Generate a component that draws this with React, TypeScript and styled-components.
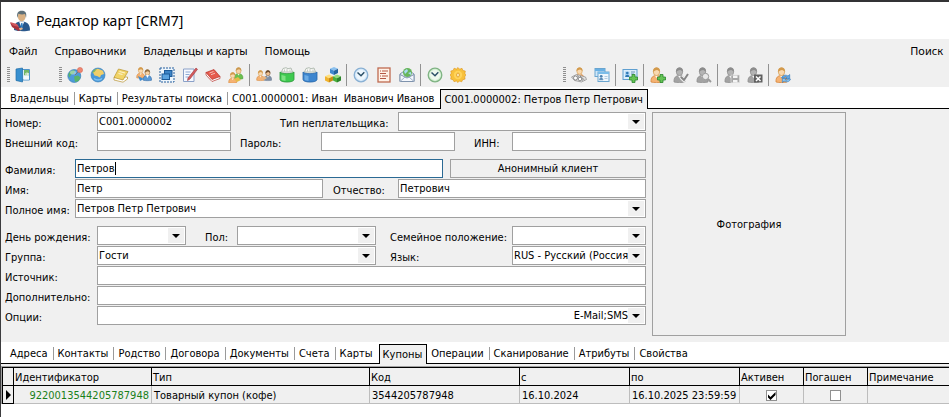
import React from "react";
import styled, { createGlobalStyle } from "styled-components";

const uiFont = `"DejaVu Sans Condensed", "Noto Sans", sans-serif`;
const shellFont = `"Noto Sans", "Open Sans", sans-serif`;

const arrow = `url("data:image/svg+xml,%3Csvg xmlns='http://www.w3.org/2000/svg' width='16' height='15'%3E%3Crect width='16' height='15' fill='%23f0f0f0'/%3E%3Cpath d='M4 6h8l-4 4z' fill='%23000'/%3E%3C/svg%3E")`;
const tick = `url("data:image/svg+xml,%3Csvg xmlns='http://www.w3.org/2000/svg' width='9' height='9'%3E%3Cpath d='M1 3.5v3L3.5 9 8.500 4V1L3.500 6z' fill='%23000'/%3E%3C/svg%3E")`;

const Global = createGlobalStyle`
  * { box-sizing: border-box; }
  body { margin: 0; background: #fff; }
  button, input, select, table { font: inherit; color: inherit; }
`;

const Window = styled.div`
  min-height: 100vh;
  border-left: 1px solid #3c3c3e;
  border-top: 2px solid #333335;
  background: #fff;
  color: #000;
  font-family: ${uiFont};
  font-size: 11px;
  line-height: 15px;
`;

const TitleBar = styled.header`
  display: flex;
  align-items: center;
  gap: 5px;
  height: 37px;
  padding-left: 8px;
`;

const Title = styled.h1`
  margin: 0;
  font-family: ${shellFont};
  font-size: 14px;
  line-height: 24px;
  font-weight: 400;
  color: #000;
`;

const MenuBar = styled.nav`
  display: flex;
  align-items: center;
  height: 23px;
  padding: 0 6px 0 0;
  background: #f0f0f0;
  font-family: ${shellFont};
  font-size: 11px;
`;

const MenuItem = styled.button<{ $last?: boolean }>`
  border: 0;
  padding: 0 8px;
  background: none;
  line-height: 20px;
  margin-left: ${(p) => (p.$last ? "auto" : "0")};
  padding-right: ${(p) => (p.$last ? "0" : "9px")};
`;

const ToolBar = styled.div`
  display: flex;
  align-items: center;
  height: 25px;
  background: #f0f0f0;
`;

const ToolGroup = styled.div<{ $indent: number }>`
  display: flex;
  align-items: center;
  height: 24px;
  padding-right: 4px;
  margin-left: ${(p) => p.$indent}px;
`;

const Grip = styled.span`
  width: 3px;
  height: 16px;
  margin-right: 1px;
  background: repeating-linear-gradient(#8f8f8f 0 1px, #f0f0f0 1px 2px);
`;

const ToolButton = styled.button`
  display: flex;
  align-items: center;
  justify-content: center;
  width: 23px;
  height: 22px;
  border: 0;
  padding: 0;
  background: none;
`;

const Separator = styled.span`
  width: 1px;
  height: 22px;
  margin: 0 2px;
  background: #929292;
`;

const Tabs = styled.div`
  display: flex;
  align-items: flex-end;
  height: 22px;
  padding-left: 5px;
  background: linear-gradient(#000, #000) bottom / 100% 1px no-repeat #fff;
`;

const Tab = styled.button<{ $active?: boolean; $divider?: boolean }>`
  display: flex;
  align-items: center;
  height: ${(p) => (p.$active ? 20 : 19)}px;
  border: solid #000;
  border-width: ${(p) => (p.$active ? "1px 1px 0" : "0")};
  padding: ${(p) => (p.$active ? "0 4px 0 3px" : "0 6px 0 4px")};
  margin-bottom: ${(p) => (p.$active ? 0 : 1)}px;
  background: ${(p) =>
    p.$active
      ? "#f0f0f0"
      : p.$divider
      ? "linear-gradient(#9a9a9a, #9a9a9a) right 3px / 1px 13px no-repeat"
      : "none"};
  white-space: pre;
`;

const Form = styled.form`
  display: grid;
  grid-template-columns: minmax(0, 641fr) minmax(0, 194fr) minmax(0, 97fr);
  gap: 6px;
  padding: 3px 0 6px 4px;
  background: #f0f0f0;
`;

const Fields = styled.div`
  display: flex;
  flex-direction: column;
  gap: 1px;
`;

const Row = styled.div<{ $columns: string; $spaced?: boolean }>`
  display: grid;
  grid-template-columns: ${(p) => p.$columns};
  height: 19px;
  margin-top: ${(p) => (p.$spaced ? 7 : 0)}px;
`;

const Label = styled.label<{ $indent?: number }>`
  padding: 4px 0 0 ${(p) => p.$indent ?? 0}px;
  white-space: nowrap;
`;

const TextInput = styled.input`
  width: 100%;
  min-width: 0;
  height: 19px;
  border: 1px solid #a0a0a0;
  border-radius: 0;
  padding: 0 1px 1px;
  background: #fff;
  outline: none;
`;

const ActiveInput = styled(TextInput)`
  border-color: #2b6a94;
  background: linear-gradient(#000, #000) 39px 2px / 1px 13px no-repeat #fff;
`;

const Select = styled.select<{ $right?: boolean }>`
  appearance: none;
  width: 100%;
  min-width: 0;
  height: 19px;
  border: 1px solid #a0a0a0;
  border-radius: 0;
  padding: 0 17px 1px 1px;
  background: ${arrow} right 1px center no-repeat #fff;
  text-align-last: ${(p) => (p.$right ? "right" : "left")};
  outline: none;
`;

const PlainButton = styled.button`
  height: 19px;
  border: 1px solid #a0a0a0;
  padding: 0;
  background: #f0f0f0;
`;

const Photo = styled.button`
  height: 224px;
  border: 1px solid #a0a0a0;
  padding: 0;
  background: #f0f0f0;
`;

const GridFrame = styled.div`
  border-left: 1px solid #a0a0a0;
  border-top: 1px solid #a0a0a0;
  margin-top: 2px;
  overflow: hidden;
`;

const TableArea = styled.section`
  background: linear-gradient(#f0f0f0, #f0f0f0) top / 100% 2px no-repeat #fff;
  display: flow-root;
`;

const DataTable = styled.table`
  width: 100%;
  table-layout: fixed;
  border-collapse: separate;
  border-spacing: 0;
  background: #f0f0f0;
`;

const Col = styled.col<{ $width?: number }>`
  width: ${(p) => (p.$width ? `${p.$width}px` : "auto")};
`;

const Head = styled.th`
  height: 19px;
  border: solid #000;
  border-width: 1px 1px 1px 0;
  padding: 1px 1px 0;
  font-weight: 400;
  text-align: left;
  white-space: nowrap;
  &:first-child { border-left-width: 1px; }
  &:last-child { border-right-width: 0; }
`;

const Cell = styled.td<{ $align?: string; $color?: string }>`
  height: 18px;
  border: solid #bdbdbd;
  border-width: 0 1px 1px 0;
  padding: 1px 2px 0;
  text-align: ${(p) => p.$align ?? "left"};
  color: ${(p) => p.$color ?? "inherit"};
  white-space: nowrap;
  &:last-child { border-right-width: 0; }
`;

const Marker = styled.td`
  height: 18px;
  border: solid #000;
  border-width: 0 1px 1px;
  padding: 0 0 0 3px;
  svg { display: block; }
`;

const CheckBox = styled.input`
  appearance: none;
  display: block;
  width: 11px;
  height: 11px;
  margin: 0 auto;
  border: 1px solid #909090;
  background: #fff;
  &:checked { background: ${tick} center no-repeat #fff; }
`;

/* ---------- icons ---------- */

const Svg = ({ size = 16, children }: { size?: number; children: React.ReactNode }) => (
  <svg width={size} height={size} viewBox="0 0 16 16" fill="none" aria-hidden="true">
    {children}
  </svg>
);

type Tone = { hair: string; skin: string; body: string; edge: string };
const orange: Tone = { hair: "#d39a4c", skin: "#f9d9b0", body: "#f5b272", edge: "#d6863c" };
const grey: Tone = { hair: "#8c8c8c", skin: "#b4b4b4", body: "#a3a3a3", edge: "#8f8f8f" };
const blue: Tone = { hair: "#8f6a3c", skin: "#f7d3a4", body: "#5b9ad6", edge: "#2f6aa8" };
const green: Tone = { hair: "#c9974e", skin: "#f7d3a4", body: "#6cc04e", edge: "#4c9c3a" };
const brown: Tone = { hair: "#6b4a2c", skin: "#f0c090", body: "#7d8fa6", edge: "#6b7a90" };

const Person = ({ tone, x = 0, y = 0, s = 1 }: { tone: Tone; x?: number; y?: number; s?: number }) => (
  <g transform={`translate(${x} ${y}) scale(${s})`}>
    <path d="M1 15c-.4-4.500 2-6.500 5.500-6.500S12.400 10.500 12 15c-3 .8-8 .8-11 0z" fill={tone.body} stroke={tone.edge} strokeWidth=".8" />
    <path d="M5 8.500l1.500 2.500L8 8.500z" fill="#fff" />
    <ellipse cx="6.500" cy="4.700" rx="3.200" ry="3.900" fill={tone.skin} stroke={tone.hair} strokeWidth=".7" />
    <path d="M3 5C2.800 2.500 4.200.5 6.600.5S10.200 2.500 10 5C9 3.800 8 3.300 7 3 6 3.200 4.500 3.800 3 5z" fill={tone.hair} />
  </g>
);

const Globe = () => (
  <>
    <circle cx="7.300" cy="9" r="6.500" fill="#4d9bd8" stroke="#3179b5" strokeWidth=".6" />
    <path d="M2 6C4 3.500 6 3.100 8 3.500l-1 3-3 1-1.500 3C1 9 1.400 7 2 6zM7 9.500l4-1 2.500 2-2 3.500-3.500 1z" fill="#59b46a" />
    <ellipse cx="6" cy="5.500" rx="3" ry="2" fill="#fff" opacity=".4" />
  </>
);

const Clock = ({ ring, face }: { ring: string; face: string }) => (
  <Svg>
    <circle cx="8" cy="8" r="6.800" fill={face} stroke={ring} strokeWidth="1.300" />
    <circle cx="8" cy="8" r="4.900" fill="#fff" opacity=".6" />
    <path d="M4.500 5.500L8 8.800l3.300-3.600" stroke="#2c5068" strokeWidth="1.500" />
  </Svg>
);

const Bucket = ({ main, dark, light }: { main: string; dark: string; light: string }) => (
  <Svg>
    <path d="M2.500 5L4 1.500l3-.8 2 1 3-.7L13.500 5z" fill="#f7f9f5" stroke="#9aa69a" strokeWidth=".7" />
    <path d="M5.500 2.500v2M8 2v2.500M11 2.500v2" stroke="#b3b3b3" strokeWidth=".7" />
    <path d="M1 5v7.500c0 3.400 14 3.400 14 0V5c-2 2.200-12 2.200-14 0z" fill={main} stroke={dark} strokeWidth=".8" />
    <path d="M2.500 8v4.500c1 1 3 1.300 4 1.400V9z" fill={light} opacity=".6" />
  </Svg>
);

const Cube = ({ x, y, c }: { x: number; y: number; c: [string, string, string] }) => (
  <g transform={`translate(${x} ${y})`}>
    <path d="M0 1.800L4 0l4 1.800L4 3.700z" fill={c[0]} />
    <path d="M0 1.800l4 1.900V8L0 6z" fill={c[1]} />
    <path d="M8 1.800L4 3.700V8l4-2z" fill={c[2]} />
  </g>
);

const Book = ({ main, dark }: { main: string; dark: string }) => (
  <Svg>
    <path d="M1 10.500V13l9 2.200 4.500-3.200v-2z" fill="#fff" stroke={dark} strokeWidth=".7" />
    <path d="M5.500 2L15 4.500 10 13 1 10.500z" fill={main} stroke={dark} strokeWidth=".7" />
    <path d="M6.500 4.500l5.500 1.500M5.500 6.500l4 1" stroke="#fff" opacity=".7" />
  </Svg>
);

const RedBook = () => (
  <Svg>
    <path d="M1 5.500V8l6 6.500 8-3v-2z" fill="#fff" stroke="#b7332c" strokeWidth=".7" />
    <path d="M1 5.500L9 2.500l6 7-8 3z" fill="#e55a4c" stroke="#b7332c" strokeWidth=".7" />
    <path d="M4.500 6l4-1.500M6 7.700l4-1.500" stroke="#fff" opacity=".6" />
  </Svg>
);

const icons: Record<string, React.ReactNode> = {
  exit: (
    <Svg>
      <path d="M1.500 2.500h13v10.500h-13z" fill="#d9ecfa" stroke="#4f94c9" />
      <path d="M9 3h5v5.500H9z" fill="#72b665" />
      <path d="M9 8.500h5v4H9z" fill="#f3f8fb" />
      <path d="M1 2l6.500-1v14L1 13.500z" fill="#378fcf" stroke="#226fa6" strokeWidth=".7" />
      <path d="M10 7h3.500M12 5.500L13.500 7 12 8.500" stroke="#fff" />
    </Svg>
  ),
  globePin: (
    <Svg>
      <Globe />
      <path d="M8 8l4-4" stroke="#777" />
      <circle cx="13" cy="3" r="2.600" fill="#ee8672" stroke="#d0604c" strokeWidth=".5" />
    </Svg>
  ),
  globe: (
    <Svg>
      <circle cx="8" cy="8" r="7" fill="#4898d9" stroke="#3078b4" strokeWidth=".6" />
      <path d="M3 5.500c1-2.500 3-3.800 5-3.800l5 2 1 3.300-3 1-1 2.500L7 9 4.500 8.500z" fill="#f1ce68" />
      <path d="M2 6c1-2.500 2.500-4 5-4.300L4.500 5z" fill="#85b95a" />
      <path d="M4 11.500c2 2 6 2 8 0" stroke="#83c2ef" strokeWidth="1.400" />
    </Svg>
  ),
  yellowBook: <Book main="#f1d468" dark="#b7922f" />,
  couple: (
    <Svg>
      <Person tone={orange} y={0} s={0.72} />
      <Person tone={blue} x={6.500} y={2} s={0.75} />
      <path d="M2 9l6 3-4 2z" fill="#418cce" />
      <path d="M10 8l1.500 3L13 8z" fill="#fff" />
    </Svg>
  ),
  windows: (
    <Svg>
      <rect x="1" y="1" width="14" height="14" fill="#edf5fc" stroke="#245f9e" strokeDasharray="2 1" />
      <rect x="5.500" y="3.500" width="7.500" height="6" fill="#3d84c6" stroke="#1b5998" />
      <rect x="3" y="7" width="7.500" height="5.500" fill="#5aa2df" stroke="#1b5998" />
    </Svg>
  ),
  notePen: (
    <Svg>
      <path d="M1.500 2h10.500v12.500H1.500z" fill="#f6f9ff" stroke="#8ba1c8" />
      <path d="M3.500 5h5M3.500 7.500h4M3.500 10h3" stroke="#8ea9d5" />
      <path d="M14 1l1.500 1.300L8 12l-2.500 1.500L6 11z" fill="#d65c5c" stroke="#9b3540" strokeWidth=".6" />
    </Svg>
  ),
  redBook: <RedBook />,
  people: (
    <Svg>
      <Person tone={green} x={5.500} y={0} s={0.78} />
      <Person tone={orange} x={0} y={5} s={0.72} />
      <path d="M6 12l4-2 3 3-4 2z" fill="#e5bb48" />
    </Svg>
  ),
  owners: (
    <Svg>
      <Person tone={orange} y={3} s={0.68} />
      <Person tone={brown} x={7.500} y={3} s={0.68} />
      <path d="M5 11l3-2 3 2-3 2z" fill="#e7b480" />
    </Svg>
  ),
  greenBucket: <Bucket main="#3fca50" dark="#299638" light="#a7f0a3" />,
  blueBucket: <Bucket main="#3e86cf" dark="#2666a7" light="#8bc4f4" />,
  cubes: (
    <Svg>
      <Cube x={5} y={0} c={["#8bc1ef", "#4188ce", "#24639f"]} />
      <Cube x={0} y={7.500} c={["#ffe07d", "#f0b32d", "#c98a17"]} />
      <Cube x={8} y={7.500} c={["#96dc7b", "#48af3d", "#2b852c"]} />
    </Svg>
  ),
  clock: <Clock ring="#89b0d3" face="#d7eafa" />,
  report: (
    <Svg>
      <rect x="2" y="1" width="12" height="14" fill="#fff2e8" stroke="#bf6a50" strokeWidth="1.300" />
      <path d="M4 4h1M6 4h6M4 6.500h6M4 9h1M6 9h6M4 11.500h6" stroke="#b55845" />
    </Svg>
  ),
  mail: (
    <Svg>
      <path d="M1 7l7-5 7 5v7.500H1z" fill="#e3ebf5" stroke="#7f93ad" />
      <circle cx="8.500" cy="5.500" r="4.500" fill="#67b55b" />
      <path d="M5 4l3-2 1 2-3 3zM9 6l3-1v3z" fill="#a9dcf5" />
      <path d="M1 7.500L8 11l7-3.500v7H1z" fill="#f5f8fd" stroke="#7f93ad" />
      <path d="M1 14.500l5-4.500M15 14.500L10 10" stroke="#9fb0c6" />
    </Svg>
  ),
  greenClock: <Clock ring="#7fb383" face="#d6f1d6" />,
  gear: (
    <Svg>
      <path
        d="M8 .5l1.700 1.700L12 1.300l.9 2.200 2.400.5-.4 2.400L16 8l-1.300 1.800.4 2.300-2.400.6-1 2.100-2.200-.8L8 15.500 6.300 14l-2.300.7-1-2-2.300-.6.4-2.400L0 8l1.300-1.700L.8 4l2.400-.6.9-2.200 2.300.9z"
        fill="#f8c13c"
        stroke="#dd951f"
        strokeWidth=".6"
      />
      <circle cx="8" cy="8" r="4.200" fill="#ffd45a" />
      <ellipse cx="8" cy="8" rx="1.400" ry="2" fill="#fff0c0" stroke="#dd951f" strokeWidth=".8" />
    </Svg>
  ),
  personCards: (
    <Svg>
      <Person tone={orange} x={3} y={0} s={0.85} />
      <path d="M.5 10l5-2.500 9 2.500 1 2.500-5 2.500-7-1.500z" fill="#e2e2e2" stroke="#8d8d8d" strokeWidth=".7" />
      <path d="M6 8.500l6 5M9 9l4.500 4" stroke="#777" strokeWidth=".8" />
      <circle cx="4.500" cy="11" r="2" fill="#fff" stroke="#777" strokeWidth=".8" />
      <circle cx="9" cy="12" r="1.800" fill="#fff" stroke="#777" strokeWidth=".8" />
    </Svg>
  ),
  cards: (
    <Svg>
      <rect x="1" y="1.500" width="10" height="8" fill="#cfe7f8" stroke="#6aa5cf" />
      <path d="M1 2h10v2H1z" fill="#68b0e4" />
      <rect x="4" y="5" width="11" height="9.500" fill="#eef7fd" stroke="#6aa5cf" />
      <path d="M4 5h11v2H4z" fill="#7bbde9" />
      <circle cx="7.200" cy="9.300" r="1.400" fill="#4d83b1" />
      <path d="M5.300 13c0-3 3.800-3 3.800 0zM10.500 9.500h3M10.500 11.500h3" fill="#4d83b1" stroke="#8aaccc" strokeWidth=".6" />
    </Svg>
  ),
  cardAdd: (
    <Svg>
      <rect x="1" y="2.500" width="14" height="10" fill="#dceefb" stroke="#5f9fd0" />
      <path d="M3 4.500h4.500V10H3z" fill="#a9d3f2" />
      <circle cx="5.300" cy="6" r="1.300" fill="#2f78b5" />
      <path d="M3.200 10c0-3 4.200-3 4.200 0z" fill="#2f78b5" />
      <path d="M9 5h4M9 7h3" stroke="#6d95b5" />
      <path d="M10 7.500h3V10h2.500v3H13v2.500h-3V13H7.500v-3H10z" fill="#65c454" stroke="#29872e" strokeWidth=".8" />
    </Svg>
  ),
  personAdd: (
    <Svg>
      <Person tone={orange} />
      <path d="M10 7.500h3V10h2.500v3H13v2.500h-3V13H7.500v-3H10z" fill="#65c454" stroke="#29872e" strokeWidth=".8" />
    </Svg>
  ),
  personCheck: (
    <Svg>
      <Person tone={grey} />
      <path d="M8 10l3 3 4-6" stroke="#f0f0f0" strokeWidth="4" />
      <path d="M8 10l3 3 4-6" stroke="#858585" strokeWidth="2" />
    </Svg>
  ),
  personFind: (
    <Svg>
      <Person tone={grey} />
      <circle cx="9.500" cy="9.500" r="3.200" fill="#e8e8e8" stroke="#999" />
      <path d="M12 12l3 3" stroke="#999" strokeWidth="1.800" />
    </Svg>
  ),
  personSave: (
    <Svg>
      <Person tone={grey} />
      <path d="M7 8h8.500v7.500H7z" fill="#a7a7a7" stroke="#e5e5e5" strokeWidth=".6" />
      <path d="M9 8.500h4.500v2.500H9zM9 13h4.500v2.500H9z" fill="#f4f4f4" />
    </Svg>
  ),
  personDelete: (
    <Svg>
      <Person tone={grey} />
      <path d="M7 7.500h8.500v8H7z" fill="#606060" />
      <path d="M9 9.500l4.500 4.500M13.500 9.500L9 14" stroke="#fff" strokeWidth="1.500" />
    </Svg>
  ),
  personRefresh: (
    <Svg>
      <Person tone={orange} />
      <path d="M6.500 11c.8-3 4.500-3.500 6.500-2l1.700-1.500v4h-4l1.200-1.300c-1.200-.7-2.400-.4-3 .8z" fill="#63a9e6" stroke="#2f74b6" strokeWidth=".6" />
      <path d="M15.500 12c-.8 3-4.500 3.500-6.500 2l-1.700 1.500v-4h4l-1.200 1.300c1.200.7 2.400.4 3-.8z" fill="#8cc6f2" stroke="#2f74b6" strokeWidth=".6" />
    </Svg>
  ),
};

const AppIcon = () => (
  <svg width="22" height="22" viewBox="0 0 22 22" aria-hidden="true">
    <path d="M5 20c0-6 2-8.500 7.500-8.500S21 14 21 20.500c-4 1-12 1-16-.5z" fill="#2a588c" />
    <path d="M10 11.500l2.500 6 3-6z" fill="#f4f7fb" />
    <path d="M12.200 13h1.200l.6 4-1.300 2-1-2z" fill="#2f7cc0" />
    <ellipse cx="12.700" cy="6.500" rx="3.800" ry="5" fill="#d9b184" />
    <path d="M8.300 8C7.500 3 9 .8 12.800.8S18 3 17 8l-1-4c-2 .6-4.500.5-6.500-.2z" fill="#5f7078" />
    <path d="M1 12.500l7 3 4 4-2.500 1.500L3 17z" fill="#a8323d" />
    <path d="M1 12l7 2 2 3-6-1.500z" fill="#d0585f" />
    <path d="M10 18l3-.5 1 1.500-3 1.500z" fill="#e6b58c" />
  </svg>
);

type ToolItem = [string, string] | null;

const mainTools: ToolItem[] = [
  ["globePin", "Регионы"],
  ["globe", "Страны"],
  ["yellowBook", "Справочник"],
  ["couple", "Родство"],
  ["windows", "Окна"],
  ["notePen", "Договора"],
  ["redBook", "Книга"],
  ["people", "Группы"],
  null,
  ["owners", "Владельцы"],
  ["greenBucket", "Счета"],
  ["blueBucket", "Карты"],
  ["cubes", "Купоны"],
  null,
  ["clock", "Расписание"],
  ["report", "Отчёт"],
  ["mail", "Рассылка"],
  null,
  ["greenClock", "Журнал"],
  ["gear", "Настройки"],
];

const ownerTools: ToolItem[] = [
  ["personCards", "Карты владельца"],
  ["cards", "Список карт"],
  null,
  ["cardAdd", "Добавить карту"],
  null,
  ["personAdd", "Добавить владельца"],
  ["personCheck", "Проверить"],
  ["personFind", "Найти"],
  null,
  ["personSave", "Сохранить"],
  ["personDelete", "Удалить"],
  null,
  ["personRefresh", "Обновить"],
];

const Tools = ({ items, indent }: { items: ToolItem[]; indent: number }) => (
  <ToolGroup $indent={indent}>
    <Grip />
    {items.map((item, i) =>
      item ? (
        <ToolButton key={item[0]} type="button" aria-label={item[1]}>
          {icons[item[0]]}
        </ToolButton>
      ) : (
        <Separator key={i} />
      )
    )}
  </ToolGroup>
);

const TabStrip = ({ items, active }: { items: string[]; active: number }) => (
  <Tabs role="tablist">
    {items.map((name, i) => (
      <Tab
        key={name}
        type="button"
        role="tab"
        aria-selected={i === active}
        $active={i === active}
        $divider={i + 1 !== active && i < items.length - 1}
      >
        {name}
      </Tab>
    ))}
  </Tabs>
);

type FieldProps = { id: string; label: string; value?: string; indent?: number; right?: boolean };

const TextField = ({ id, label, value = "", indent }: FieldProps) => (
  <>
    <Label htmlFor={id} $indent={indent}>{label}</Label>
    <TextInput id={id} defaultValue={value} />
  </>
);

const SelectField = ({ id, label, value = "", indent, right }: FieldProps) => (
  <>
    <Label htmlFor={id} $indent={indent}>{label}</Label>
    <Select id={id} defaultValue={value} $right={right}>
      <option>{value}</option>
    </Select>
  </>
);

const ownerTabs = [
  "Владельцы",
  "Карты",
  "Результаты поиска",
  "C001.0000001: Иван  Иванович Иванов",
  "C001.0000002: Петров Петр Петрович",
];

const detailTabs = [
  "Адреса", "Контакты", "Родство", "Договора", "Документы", "Счета", "Карты",
  "Купоны", "Операции", "Сканирование", "Атрибуты", "Свойства",
];

const columns: [string, number?][] = [
  ["Идентификатор", 138],
  ["Тип", 218],
  ["Код", 150],
  ["с", 110],
  ["по", 110],
  ["Активен", 64],
  ["Погашен", 64],
  ["Примечание"],
];

export default function App() {
  return (
    <Window>
      <Global />
      <TitleBar>
        <AppIcon />
        <Title>Редактор карт [CRM7]</Title>
      </TitleBar>
      <MenuBar>
        <MenuItem>Файл</MenuItem>
        <MenuItem>Справочники</MenuItem>
        <MenuItem>Владельцы и карты</MenuItem>
        <MenuItem>Помощь</MenuItem>
        <MenuItem $last>Поиск</MenuItem>
      </MenuBar>
      <ToolBar>
        <Tools items={[["exit", "Выход"]]} indent={6} />
        <Tools items={mainTools} indent={21} />
        <Tools items={ownerTools} indent={90} />
      </ToolBar>
      <TabStrip items={ownerTabs} active={4} />
      <Form onSubmit={(e) => e.preventDefault()}>
        <Fields>
          <Row $columns="92px 134fr 167px 248fr">
            <TextField id="number" label="Номер:" value="C001.0000002" />
            <SelectField id="nonpayer" label="Тип неплательщика:" indent={49} />
          </Row>
          <Row $columns="92px 134fr 90px 134fr 57px 134fr">
            <TextField id="external" label="Внешний код:" />
            <TextField id="password" label="Пароль:" indent={9} />
            <TextField id="inn" label="ИНН:" indent={19} />
          </Row>
          <Row $columns="70px 368fr 7px 196fr" $spaced>
            <Label htmlFor="surname">Фамилия:</Label>
            <ActiveInput id="surname" defaultValue="Петров" />
            <span />
            <PlainButton type="button">Анонимный клиент</PlainButton>
          </Row>
          <Row $columns="70px 248fr 75px 248fr">
            <TextField id="name" label="Имя:" value="Петр" />
            <TextField id="patronymic" label="Отчество:" value="Петрович" indent={10} />
          </Row>
          <Row $columns="70px 571fr">
            <SelectField id="fullname" label="Полное имя:" value="Петров Петр Петрович" />
          </Row>
          <Row $columns="92px 89fr 51px 139fr 136px 134fr" $spaced>
            <SelectField id="birthday" label="День рождения:" />
            <SelectField id="sex" label="Пол:" indent={19} />
            <SelectField id="marital" label="Семейное положение:" indent={14} />
          </Row>
          <Row $columns="92px 279fr 136px 134fr">
            <SelectField id="group" label="Группа:" value="Гости" />
            <SelectField id="language" label="Язык:" value="RUS - Русский (Россия)" indent={14} />
          </Row>
          <Row $columns="92px 549fr">
            <TextField id="source" label="Источник:" />
          </Row>
          <Row $columns="92px 549fr">
            <TextField id="extra" label="Дополнительно:" />
          </Row>
          <Row $columns="92px 549fr">
            <SelectField id="options" label="Опции:" value="E-Mail;SMS" right />
          </Row>
        </Fields>
        <Photo type="button">Фотография</Photo>
      </Form>
      <TabStrip items={detailTabs} active={7} />
      <TableArea>
        <GridFrame>
          <DataTable>
            <colgroup>
              <Col $width={12} />
              {columns.map(([name, width]) => (
                <Col key={name} $width={width} />
              ))}
            </colgroup>
            <thead>
              <tr>
                <Head aria-label="Текущая строка" />
                {columns.map(([name]) => (
                  <Head key={name} scope="col">{name}</Head>
                ))}
              </tr>
            </thead>
            <tbody>
              <tr>
                <Marker>
                  <svg width="6" height="10" viewBox="0 0 6 10" aria-hidden="true">
                    <path d="M0 0l5 5-5 5z" fill="#000" />
                  </svg>
                </Marker>
                <Cell $align="right" $color="#1a801a">9220013544205787948</Cell>
                <Cell>Товарный купон (кофе)</Cell>
                <Cell>3544205787948</Cell>
                <Cell>16.10.2024</Cell>
                <Cell>16.10.2025 23:59:59</Cell>
                <Cell><CheckBox type="checkbox" aria-label="Активен" defaultChecked /></Cell>
                <Cell><CheckBox type="checkbox" aria-label="Погашен" /></Cell>
                <Cell />
              </tr>
            </tbody>
          </DataTable>
        </GridFrame>
      </TableArea>
    </Window>
  );
}
